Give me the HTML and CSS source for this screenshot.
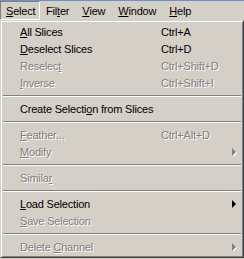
FILE: index.html
```html
<!DOCTYPE html>
<html lang="en">

<head>
    <meta charset="UTF-8">
    <title>Select Menu</title>
    <link rel="stylesheet" href="styles.css">
</head>

<body>
    <div class="menubar">
        <span class="bar-item pressed"><u>S</u>elect</span>
        <span class="bar-item">Fil<u>t</u>er</span>
        <span class="bar-item"><u>V</u>iew</span>
        <span class="bar-item"><u>W</u>indow</span>
        <span class="bar-item"><u>H</u>elp</span>
    </div>

    <div class="dropdown">
        <div class="item"><span class="label"><u>A</u>ll Slices</span><span class="keys">Ctrl+A</span></div>
        <div class="item"><span class="label"><u>D</u>eselect Slices</span><span class="keys">Ctrl+D</span></div>
        <div class="item disabled"><span class="label">Reselec<u>t</u></span><span class="keys">Ctrl+Shift+D</span></div>
        <div class="item disabled"><span class="label"><u>I</u>nverse</span><span class="keys">Ctrl+Shift+I</span></div>
        <div class="sep"></div>
        <div class="item"><span class="label wide">Create Selecti<u>o</u>n from Slices</span></div>
        <div class="sep"></div>
        <div class="item disabled"><span class="label"><u>F</u>eather...</span><span class="keys">Ctrl+Alt+D</span></div>
        <div class="item disabled"><span class="label"><u>M</u>odify</span><span class="arrow"></span></div>
        <div class="sep"></div>
        <div class="item disabled"><span class="label">Simila<u>r</u></span></div>
        <div class="sep"></div>
        <div class="item"><span class="label"><u>L</u>oad Selection</span><span class="arrow"></span></div>
        <div class="item disabled"><span class="label"><u>S</u>ave Selection</span></div>
        <div class="sep"></div>
        <div class="item disabled"><span class="label">Delete <u>C</u>hannel</span><span class="arrow"></span></div>
    </div>
</body>

</html>
```

FILE: styles.css
```css
body {
    margin: 0;
    background-color: #d4d0c8;
    font-family: "Liberation Sans", Arial, sans-serif;
    font-size: 11px;
    letter-spacing: -0.2px;
    color: #000;
    border-top: 1px solid #6f8fcf;
    /* bottom of the title bar */
}

.menubar {
    display: flex;
    height: 19px;
}

.bar-item {
    display: flex;
    align-items: center;
    padding: 0 6px 0 5px;
    border: 1px solid transparent;
}

.bar-item.pressed {
    width: 27px;
    padding-left: 5px;
    border-color: #808080 #fff #fff #808080;
    /* sunken look */
}

.dropdown {
    border: 1px solid;
    border-color: #d4d0c8 #404040 #404040 #d4d0c8;
    box-shadow: inset 1px 1px 0 #fff, inset -1px -1px 0 #808080;
    padding: 2px 3px 2px 3px;
}

.item {
    display: flex;
    align-items: center;
    height: 17px;
}

.label {
    width: 141px;
    padding-left: 16px;
    white-space: nowrap;
}

.label.wide {
    width: auto;
}

.keys {
    white-space: nowrap;
}

.disabled {
    color: #808080;
    text-shadow: 1px 1px 0 #fff;
}

.arrow {
    margin-left: auto;
    margin-right: 4px;
    width: 0;
    height: 0;
    border-left: 4px solid #000;
    border-top: 4px solid transparent;
    border-bottom: 4px solid transparent;
}

.disabled .arrow {
    border-left-color: #808080;
    filter: drop-shadow(1px 1px 0 #fff);
}

.sep {
    height: 0;
    margin: 4px -1px 3px -1px;
    border-top: 1px solid #808080;
    border-bottom: 1px solid #fff;
}
```
